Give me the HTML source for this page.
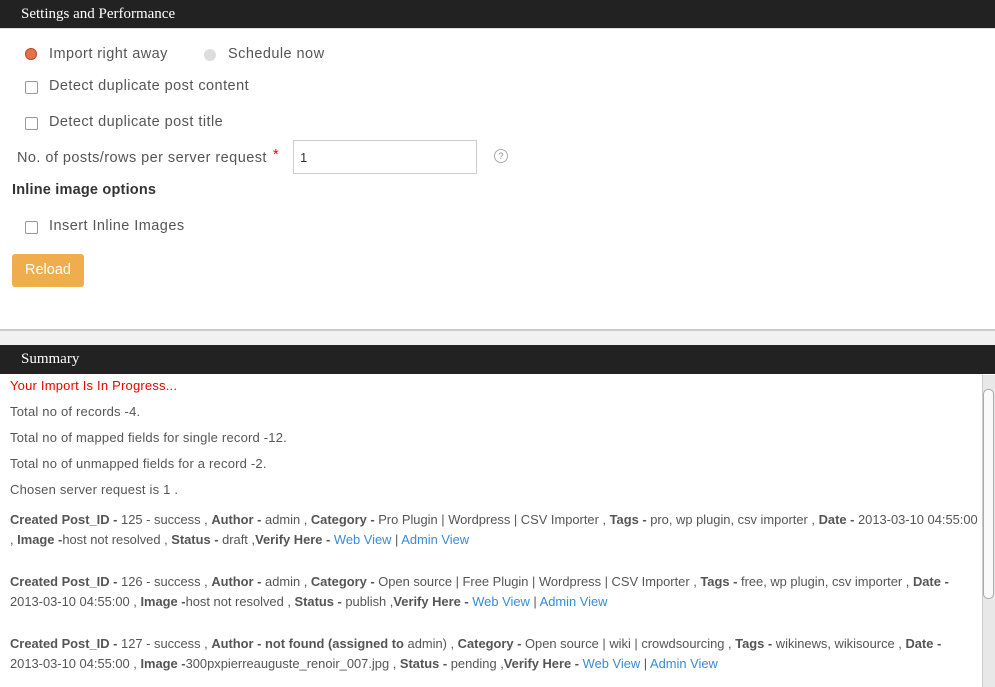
<!DOCTYPE html>
<html><head><meta charset="utf-8"><style>
body{margin:0;width:995px;height:687px;overflow:hidden;background:#fff;font-family:"Liberation Sans",sans-serif;color:#555;position:relative}
.bar{position:absolute;left:0;width:995px;background:#222;color:#fff;font-family:"Liberation Serif",serif;font-size:15px;box-sizing:border-box;padding-left:21px}
.t{position:absolute;white-space:nowrap;font-size:14.5px;letter-spacing:0.45px;color:#555}
.cb{position:absolute;width:11px;height:11px;border:1px solid #999;border-radius:2px;background:#fff}
.s{position:absolute;left:10px;font-size:13px;white-space:nowrap;color:#555;letter-spacing:0.2px}
.p{letter-spacing:0}
b{color:#555}
a{color:#3a8ad6;text-decoration:none}
</style></head><body>
<div class="bar" style="top:0;height:28px;line-height:28px">Settings and Performance</div>
<div style="position:absolute;top:28px;left:0;width:995px;height:1px;background:#ddd"></div>
<div style="position:absolute;left:25px;top:48px;width:12px;height:12px;border-radius:50%;background:#e8704a;box-shadow:inset 0 0 0 1px #b85030"></div>
<div class="t" style="left:49px;top:46px">Import right away</div>
<div style="position:absolute;left:204px;top:49px;width:12px;height:12px;border-radius:50%;background:#ddd"></div>
<div class="t" style="left:228px;top:46px">Schedule now</div>
<div class="cb" style="left:25px;top:81px"></div>
<div class="t" style="left:49px;top:78px">Detect duplicate post content</div>
<div class="cb" style="left:25px;top:117px"></div>
<div class="t" style="left:49px;top:114px">Detect duplicate post title</div>
<div class="t" style="left:17px;top:150px">No. of posts/rows per server request</div>
<div class="t" style="left:273px;top:147px;color:#e00">*</div>
<div style="position:absolute;left:293px;top:140px;width:184px;height:34px;border:1px solid #ccc;box-sizing:border-box"></div>
<div class="t" style="left:300px;top:150px;font-size:13px;color:#333">1</div>
<div style="position:absolute;left:494px;top:149px;width:12px;height:12px;border:1px solid #aaa;border-radius:50%;font-size:9px;line-height:12px;text-align:center;color:#888">?</div>
<div class="t" style="left:12px;top:182px;font-weight:bold;color:#333;letter-spacing:0.2px">Inline image options</div>
<div class="cb" style="left:25px;top:221px"></div>
<div class="t" style="left:49px;top:218px">Insert Inline Images</div>
<div style="position:absolute;left:12px;top:254px;width:72px;height:33px;background:#f0ad4e;border-radius:3px;color:#fff;font-size:14.5px;line-height:33px;text-align:center">Reload</div>
<div style="position:absolute;top:329px;left:0;width:995px;height:2px;background:#ccc"></div>
<div style="position:absolute;top:331px;left:0;width:995px;height:14px;background:#f1f1f1"></div>
<div class="bar" style="top:345px;height:29px;line-height:29px">Summary</div>
<div class="s" style="top:378px;color:#e00">Your Import Is In Progress...</div>
<div class="s" style="top:404px">Total no of records -4.</div>
<div class="s" style="top:430px">Total no of mapped fields for single record -12.</div>
<div class="s" style="top:456px">Total no of unmapped fields for a record -2.</div>
<div class="s" style="top:482px">Chosen server request is 1 .</div>
<div class="s p" style="top:510px;line-height:20px;font-size:12.9px"><b>Created Post_ID -</b> 125 - success , <b>Author -</b> admin , <b>Category -</b> Pro Plugin | Wordpress | CSV Importer , <b>Tags -</b> pro, wp plugin, csv importer , <b>Date -</b> 2013-03-10 04:55:00<br>, <b>Image -</b>host not resolved , <b>Status -</b> draft ,<b>Verify Here -</b> <a>Web View</a> | <a>Admin View</a></div>
<div class="s p" style="top:572px;line-height:20px;font-size:12.9px"><b>Created Post_ID -</b> 126 - success , <b>Author -</b> admin , <b>Category -</b> Open source | Free Plugin | Wordpress | CSV Importer , <b>Tags -</b> free, wp plugin, csv importer , <b>Date -</b><br>2013-03-10 04:55:00 , <b>Image -</b>host not resolved , <b>Status -</b> publish ,<b>Verify Here -</b> <a>Web View</a> | <a>Admin View</a></div>
<div class="s p" style="top:634px;line-height:20px;font-size:12.9px"><b>Created Post_ID -</b> 127 - success , <b>Author - not found (assigned to</b> admin) , <b>Category -</b> Open source | wiki | crowdsourcing , <b>Tags -</b> wikinews, wikisource , <b>Date -</b><br>2013-03-10 04:55:00 , <b>Image -</b>300pxpierreauguste_renoir_007.jpg , <b>Status -</b> pending ,<b>Verify Here -</b> <a>Web View</a> | <a>Admin View</a></div>
<div style="position:absolute;left:982px;top:375px;width:13px;height:312px;background:#e8e8e8;border-left:1px solid #ccc;box-sizing:border-box"></div>
<div style="position:absolute;left:983px;top:389px;width:11px;height:210px;background:#fafafa;border:1px solid #aaa;border-radius:5px;box-sizing:border-box"></div>
</body></html>
